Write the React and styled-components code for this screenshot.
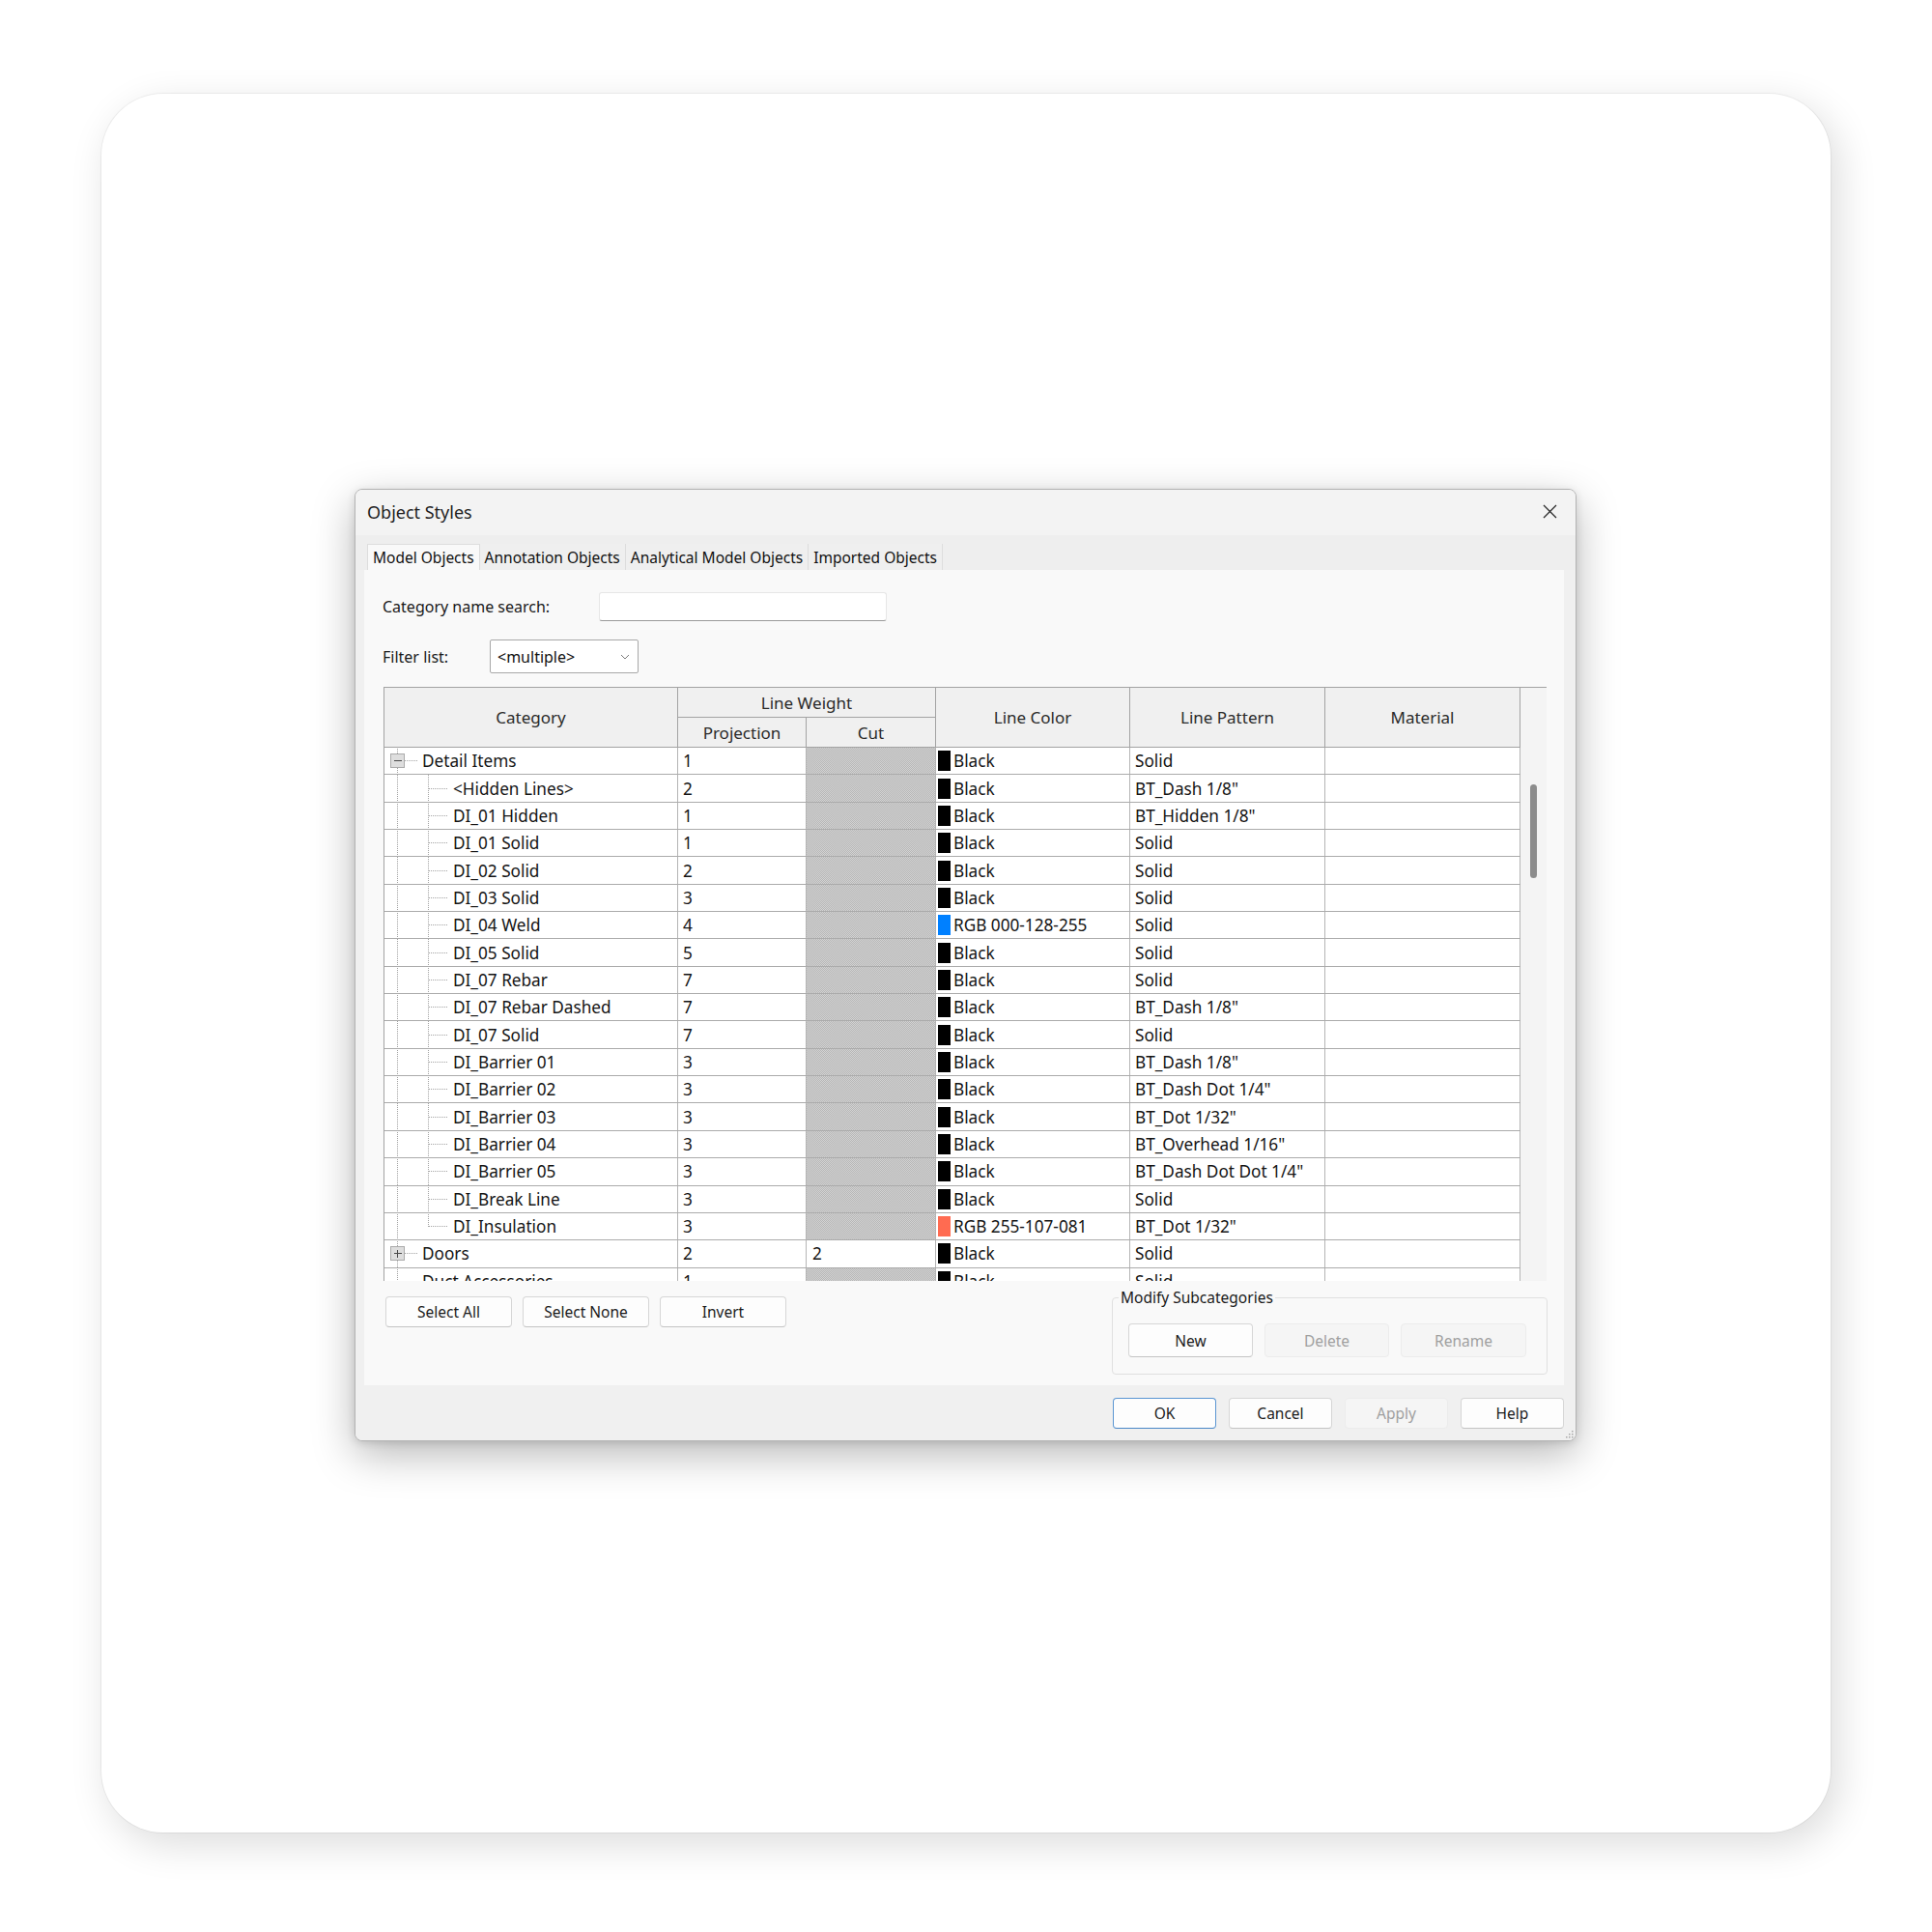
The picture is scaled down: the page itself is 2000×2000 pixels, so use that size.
import React from 'react';
import styled, { createGlobalStyle, css } from 'styled-components';

const GlobalStyle = createGlobalStyle`
  html, body { margin: 0; padding: 0; background: #ffffff; }
  body { font-family: "Segoe UI", "Noto Sans", "Open Sans", sans-serif; color: #1a1a1a; }
  * { box-sizing: border-box; }
`;

const Page = styled.div`
  width: 2000px;
  height: 2000px;
  padding: 97px 0 0 105px;
`;

const Card = styled.div`
  width: 1790px;
  height: 1800px;
  border-radius: 64px;
  background: #ffffff;
  box-shadow: 0 0 0 1px rgba(0, 0, 0, 0.05), 8px 12px 40px rgba(0, 0, 0, 0.14);
  padding: 409px 0 0 262px;
`;

const Dialog = styled.div`
  position: relative;
  width: 1265px;
  height: 986px;
  display: flex;
  flex-direction: column;
  background: #f0f0f0;
  border: 1px solid #b3b3b3;
  border-radius: 8px;
  overflow: hidden;
  box-shadow: 0 14px 44px rgba(0, 0, 0, 0.28), 0 2px 8px rgba(0, 0, 0, 0.12);
`;

const TitleBar = styled.div`
  height: 47px;
  flex-shrink: 0;
  display: flex;
  align-items: center;
  justify-content: space-between;
  padding: 0 19px 2px 12px;
  background: #f3f3f3;
`;

const Title = styled.span`
  font-size: 18px;
  color: #1f1f1f;
`;

const CloseBtn = styled.div`
  width: 16px;
  height: 16px;
  display: flex;
  align-items: center;
  justify-content: center;
`;

const TabStrip = styled.div`
  height: 36px;
  flex-shrink: 0;
  display: flex;
  align-items: flex-end;
  padding-left: 12px;
  background: #eeeeee;
`;

const Tab = styled.div`
  height: 27px;
  display: flex;
  align-items: center;
  padding: 0 5px;
  font-size: 15.5px;
  color: #111;
  white-space: nowrap;
  border-right: 1px solid #dddddd;
  background: ${(p) => (p.$active ? '#f9f9f9' : '#efefef')};
  ${(p) =>
    p.$active &&
    css`
      border-top: 1px solid #dddddd;
      border-left: 1px solid #dddddd;
    `}
`;

const Panel = styled.div`
  height: 844px;
  flex-shrink: 0;
  margin: 0 12px 0 9px;
  background: #f9f9f9;
  display: flex;
  flex-direction: column;
  padding: 23px 17px 0 19px;
`;

const FieldRow = styled.div`
  display: flex;
  align-items: center;
  height: ${(p) => p.$h}px;
  margin-top: ${(p) => p.$mt || 0}px;
`;

const Label = styled.label`
  width: ${(p) => p.$w}px;
  flex-shrink: 0;
  font-size: 16px;
  color: #1a1a1a;
`;

const SearchBox = styled.div`
  width: 298px;
  height: 30px;
  background: #ffffff;
  border: 1px solid #e6e6e6;
  border-bottom: 1px solid #9a9a9a;
  border-radius: 3px;
`;

const Select = styled.div`
  width: 154px;
  height: 35px;
  background: #ffffff;
  border: 1px solid #a8a8a8;
  border-radius: 2px;
  display: flex;
  align-items: center;
  justify-content: space-between;
  padding: 0 8px 0 7px;
  font-size: 16px;
  color: #111;
`;

const Table = styled.div`
  width: 1204px;
  height: 615px;
  margin: 14px 0 0 1px;
  flex-shrink: 0;
  display: flex;
  background: #ffffff;
  border-top: 1px solid #a3a3a3;
  border-left: 1px solid #a3a3a3;
  overflow: hidden;
`;

const GridArea = styled.div`
  width: 1176px;
  flex-shrink: 0;
  display: flex;
  flex-direction: column;
`;

const COLS = '304px 133px 134px 201px 202px 202px';

const HeaderGrid = styled.div`
  display: grid;
  grid-template-columns: ${COLS};
  grid-template-rows: 31px 31px;
  flex-shrink: 0;
`;

const HeadCell = styled.div`
  grid-column: ${(p) => p.$col};
  grid-row: ${(p) => p.$row};
  display: flex;
  align-items: center;
  justify-content: center;
  background: #f0f0f0;
  border-right: 1px solid #a3a3a3;
  border-bottom: 1px solid #a3a3a3;
  font-size: 17px;
  color: #2a2a2a;
  white-space: nowrap;
`;

const Row = styled.div`
  display: grid;
  grid-template-columns: ${COLS};
  height: 28.35px;
  flex-shrink: 0;
  border-bottom: 1px solid #ababab;
`;

const Cell = styled.div`
  display: flex;
  align-items: center;
  padding-left: ${(p) => (p.$tree ? 0 : p.$pad || 5)}px;
  border-right: 1px solid #b5b5b5;
  font-size: 17.2px;
  color: #141414;
  white-space: nowrap;
  overflow: hidden;
  ${(p) =>
    p.$hatch &&
    css`
      background: repeating-conic-gradient(#b6b6b6 0% 25%, #d3d3d3 0% 50%) 0 0 / 2px 2px;
    `}
`;

const Swatch = styled.span`
  width: 13px;
  height: 21px;
  flex-shrink: 0;
  margin: 0 3px 0 -3px;
  background: ${(p) => p.$c};
`;

const TreeSvg = styled.svg`
  display: block;
  flex-shrink: 0;
  overflow: visible;
  align-self: center;
`;

const ScrollTrack = styled.div`
  width: 27px;
  flex-shrink: 0;
  background: #f4f4f4;
  display: flex;
  flex-direction: column;
  padding: 100px 0 0 10px;
`;

const Thumb = styled.div`
  width: 7px;
  height: 97px;
  border-radius: 4px;
  background: #8c8c8c;
`;

const BottomArea = styled.div`
  display: flex;
  justify-content: space-between;
  align-items: flex-start;
`;

const LeftButtons = styled.div`
  display: flex;
  gap: 11px;
  margin: 16px 0 0 3px;
`;

const Button = styled.div`
  width: ${(p) => p.$w || 131}px;
  height: ${(p) => p.$h || 32}px;
  display: flex;
  align-items: center;
  justify-content: center;
  font-size: 15.5px;
  border-radius: 4px;
  color: ${(p) => (p.$disabled ? '#a0a0a0' : '#1b1b1b')};
  background: ${(p) => (p.$disabled ? '#f5f5f5' : '#fdfdfd')};
  border: 1px solid ${(p) => (p.$primary ? '#5a95d2' : p.$disabled ? '#ececec' : '#d6d6d6')};
  ${(p) =>
    !p.$disabled &&
    css`
      border-bottom-color: ${p.$primary ? '#4a86c6' : '#c4c4c4'};
    `}
`;

const Group = styled.fieldset`
  width: 451px;
  height: 90px;
  margin: 7px 0 0 0;
  padding: 0;
  border: 1px solid #e0e0e0;
  border-radius: 4px;
  min-width: 0;
`;

const Legend = styled.legend`
  margin-left: 6px;
  padding: 0 2px;
  font-size: 15.5px;
  line-height: 21px;
  color: #1a1a1a;
`;

const GroupButtons = styled.div`
  display: flex;
  gap: 12px;
  padding: 16px 0 0 16px;
`;

const Footer = styled.div`
  flex: 1;
  display: flex;
  justify-content: flex-end;
  align-items: flex-start;
  gap: 13px;
  padding: 13px 12px 0 0;
  background: #f0f0f0;
`;

const Grip = styled.svg`
  position: absolute;
  right: 2px;
  bottom: 2px;
`;

const rowsData = [
  { name: 'Detail Items', level: 0, box: 'minus', proj: '1', sw: '#000', color: 'Black', pat: 'Solid' },
  { name: '<Hidden Lines>', level: 1, proj: '2', sw: '#000', color: 'Black', pat: 'BT_Dash 1/8"' },
  { name: 'DI_01 Hidden', level: 1, proj: '1', sw: '#000', color: 'Black', pat: 'BT_Hidden 1/8"' },
  { name: 'DI_01 Solid', level: 1, proj: '1', sw: '#000', color: 'Black', pat: 'Solid' },
  { name: 'DI_02 Solid', level: 1, proj: '2', sw: '#000', color: 'Black', pat: 'Solid' },
  { name: 'DI_03 Solid', level: 1, proj: '3', sw: '#000', color: 'Black', pat: 'Solid' },
  { name: 'DI_04 Weld', level: 1, proj: '4', sw: 'rgb(0,128,255)', color: 'RGB 000-128-255', pat: 'Solid' },
  { name: 'DI_05 Solid', level: 1, proj: '5', sw: '#000', color: 'Black', pat: 'Solid' },
  { name: 'DI_07 Rebar', level: 1, proj: '7', sw: '#000', color: 'Black', pat: 'Solid' },
  { name: 'DI_07 Rebar Dashed', level: 1, proj: '7', sw: '#000', color: 'Black', pat: 'BT_Dash 1/8"' },
  { name: 'DI_07 Solid', level: 1, proj: '7', sw: '#000', color: 'Black', pat: 'Solid' },
  { name: 'DI_Barrier 01', level: 1, proj: '3', sw: '#000', color: 'Black', pat: 'BT_Dash 1/8"' },
  { name: 'DI_Barrier 02', level: 1, proj: '3', sw: '#000', color: 'Black', pat: 'BT_Dash Dot 1/4"' },
  { name: 'DI_Barrier 03', level: 1, proj: '3', sw: '#000', color: 'Black', pat: 'BT_Dot 1/32"' },
  { name: 'DI_Barrier 04', level: 1, proj: '3', sw: '#000', color: 'Black', pat: 'BT_Overhead 1/16"' },
  { name: 'DI_Barrier 05', level: 1, proj: '3', sw: '#000', color: 'Black', pat: 'BT_Dash Dot Dot 1/4"' },
  { name: 'DI_Break Line', level: 1, proj: '3', sw: '#000', color: 'Black', pat: 'Solid' },
  { name: 'DI_Insulation', level: 1, last: true, proj: '3', sw: 'rgb(255,107,81)', color: 'RGB 255-107-081', pat: 'BT_Dot 1/32"' },
  { name: 'Doors', level: 0, box: 'plus', proj: '2', cut: '2', sw: '#000', color: 'Black', pat: 'Solid' },
  { name: 'Duct Accessories', level: 0, proj: '1', sw: '#000', color: 'Black', pat: 'Solid' },
];

const DOT = { stroke: '#a2a2a2', strokeWidth: 1, strokeDasharray: '1 1', shapeRendering: 'crispEdges' };

function TreeGlyph({ level, box, last }) {
  const w = level === 0 ? 39 : 71;
  return (
    <TreeSvg width={w} height={29}>
      <line x1={13.5} y1={-2} x2={13.5} y2={31} {...DOT} />
      {level === 0 && <line x1={box ? 21 : 13.5} y1={14.5} x2={34} y2={14.5} {...DOT} />}
      {level === 1 && (
        <>
          <line x1={45.5} y1={-2} x2={45.5} y2={last ? 14.5 : 31} {...DOT} />
          <line x1={45.5} y1={14.5} x2={65} y2={14.5} {...DOT} />
        </>
      )}
      {box && (
        <>
          <rect x={6.5} y={7.5} width={14} height={14} fill="#dedede" stroke="#ababab" shapeRendering="crispEdges" />
          <line x1={9.5} y1={14.5} x2={17.5} y2={14.5} stroke="#4a4a4a" strokeWidth={1} shapeRendering="crispEdges" />
          {box === 'plus' && (
            <line x1={13.5} y1={10.5} x2={13.5} y2={18.5} stroke="#4a4a4a" strokeWidth={1} shapeRendering="crispEdges" />
          )}
        </>
      )}
    </TreeSvg>
  );
}

function DataRow({ r }) {
  return (
    <Row>
      <Cell $tree>
        <TreeGlyph level={r.level} box={r.box} last={r.last} />
        {r.name}
      </Cell>
      <Cell>{r.proj}</Cell>
      {r.cut ? <Cell $pad={6}>{r.cut}</Cell> : <Cell $hatch />}
      <Cell>
        <Swatch $c={r.sw} />
        {r.color}
      </Cell>
      <Cell>{r.pat}</Cell>
      <Cell />
    </Row>
  );
}

export default function App() {
  return (
    <>
      <GlobalStyle />
      <Page>
        <Card>
          <Dialog>
            <TitleBar>
              <Title>Object Styles</Title>
              <CloseBtn>
                <svg width="15" height="15" viewBox="0 0 15 15">
                  <path d="M1 1 L14 14 M14 1 L1 14" stroke="#2b2b2b" strokeWidth="1.3" fill="none" />
                </svg>
              </CloseBtn>
            </TitleBar>
            <TabStrip>
              <Tab $active>Model Objects</Tab>
              <Tab>Annotation Objects</Tab>
              <Tab>Analytical Model Objects</Tab>
              <Tab>Imported Objects</Tab>
            </TabStrip>
            <Panel>
              <FieldRow $h={30}>
                <Label $w={224}>Category name search:</Label>
                <SearchBox />
              </FieldRow>
              <FieldRow $h={35} $mt={19}>
                <Label $w={111}>Filter list:</Label>
                <Select>
                  <span>&lt;multiple&gt;</span>
                  <svg width="10" height="6" viewBox="0 0 10 6">
                    <path d="M1 1 L5 5 L9 1" stroke="#7a7a7a" strokeWidth="1" fill="none" />
                  </svg>
                </Select>
              </FieldRow>
              <Table>
                <GridArea>
                  <HeaderGrid>
                    <HeadCell $col="1" $row="1 / span 2">Category</HeadCell>
                    <HeadCell $col="2 / span 2" $row="1">Line Weight</HeadCell>
                    <HeadCell $col="2" $row="2">Projection</HeadCell>
                    <HeadCell $col="3" $row="2">Cut</HeadCell>
                    <HeadCell $col="4" $row="1 / span 2">Line Color</HeadCell>
                    <HeadCell $col="5" $row="1 / span 2">Line Pattern</HeadCell>
                    <HeadCell $col="6" $row="1 / span 2">Material</HeadCell>
                  </HeaderGrid>
                  {rowsData.map((r) => (
                    <DataRow key={r.name} r={r} />
                  ))}
                </GridArea>
                <ScrollTrack>
                  <Thumb />
                </ScrollTrack>
              </Table>
              <BottomArea>
                <LeftButtons>
                  <Button>Select All</Button>
                  <Button>Select None</Button>
                  <Button>Invert</Button>
                </LeftButtons>
                <Group>
                  <Legend>Modify Subcategories</Legend>
                  <GroupButtons>
                    <Button $w={129} $h={35}>New</Button>
                    <Button $w={129} $h={35} $disabled>Delete</Button>
                    <Button $w={130} $h={35} $disabled>Rename</Button>
                  </GroupButtons>
                </Group>
              </BottomArea>
            </Panel>
            <Footer>
              <Button $w={107} $primary>OK</Button>
              <Button $w={107}>Cancel</Button>
              <Button $w={107} $disabled>Apply</Button>
              <Button $w={107}>Help</Button>
            </Footer>
            <Grip width="10" height="10" viewBox="0 0 10 10">
              {[[8, 2], [8, 5], [5, 5], [8, 8], [5, 8], [2, 8]].map(([x, y]) => (
                <rect key={`${x}-${y}`} x={x} y={y} width="1.5" height="1.5" fill="#a8a8a8" />
              ))}
            </Grip>
          </Dialog>
        </Card>
      </Page>
    </>
  );
}
